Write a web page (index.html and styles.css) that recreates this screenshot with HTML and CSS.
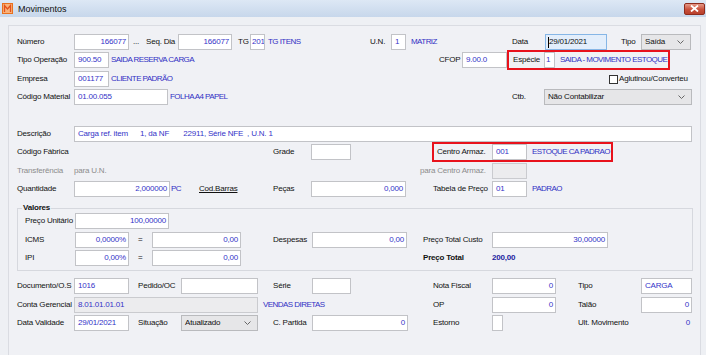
FILE: index.html
```html
<!DOCTYPE html>
<html lang="pt">
<head>
<meta charset="utf-8">
<title>Movimentos</title>
<link rel="stylesheet" href="styles.css">
</head>
<body>
<div class="titlebar">
  <div class="title">
    <svg class="appicon" width="11" height="11" viewBox="0 0 11 11"><rect x="0" y="0" width="11" height="11" fill="#f9b27a"/><rect x="0.5" y="0.5" width="10" height="10" fill="none" stroke="#e8701e"/><path d="M2.5 9V2.5L5.5 6 8.5 2.5V9" fill="none" stroke="#e4501a" stroke-width="1.3"/></svg>
    <span>Movimentos</span>
  </div>
  <div class="close"><svg width="9" height="7" viewBox="0 0 9 7"><path d="M1 0.5L8 6.5M8 0.5L1 6.5" stroke="#fff" stroke-width="1.8"/></svg></div>
</div>

<div class="panel">
  <div class="row r1">
    <span class="lbl w57">Número</span>
    <div class="fld w55 num">166077</div>
    <span class="dots w17">...</span>
    <span class="lbl w32">Seq. Dia</span>
    <div class="fld w54 num">166077</div>
    <span class="lbl w18 p6">TG</span>
    <div class="fld w15 tight">201</div>
    <span class="d w105 p3">TG ITENS</span>
    <span class="lbl w21">U.N.</span>
    <div class="fld w15">1</div>
    <span class="d w106 p5">MATRIZ</span>
    <span class="lbl w33">Data</span>
    <div class="fld w62 date"><span class="caret"></span>29/01/2021</div>
    <span class="lbl w34 p14">Tipo</span>
    <div class="sel w50">Saída<svg class="chev" width="7" height="4" viewBox="0 0 7 4"><path d="M0.5 0.5L3.5 3.5 6.5 0.5" fill="none" stroke="#666"/></svg></div>
  </div>

  <div class="row r2">
    <span class="lbl w57">Tipo Operação</span>
    <div class="fld w35">900.50</div>
    <span class="d w330 p2">SAIDA RESERVA CARGA</span>
    <span class="lbl w23">CFOP</span>
    <div class="fld w45">9.00.0</div>
    <div class="redbox w163">
      <span class="lbl w35 p4">Espécie</span>
      <div class="fld w11 tight">1</div>
      <span class="d p5">SAIDA - MOVIMENTO ESTOQUE</span>
    </div>
  </div>

  <div class="row r3">
    <span class="lbl w57">Empresa</span>
    <div class="fld w35">001177</div>
    <span class="d w500 p2">CLIENTE PADRÃO</span>
    <span class="check"></span>
    <span class="lbl p1">Aglutinou/Converteu</span>
  </div>

  <div class="row r4">
    <span class="lbl w57">Código Material</span>
    <div class="fld w94">01.00.055</div>
    <span class="d w344 p2">FOLHA A4 PAPEL</span>
    <span class="lbl w32">Ctb.</span>
    <div class="sel w148">Não Contabilizar<svg class="chev" width="7" height="4" viewBox="0 0 7 4"><path d="M0.5 0.5L3.5 3.5 6.5 0.5" fill="none" stroke="#666"/></svg></div>
  </div>

  <div class="row r5">
    <span class="lbl w57">Descrição</span>
    <div class="fld w618 pre">Carga ref. item      1, da NF       22911, Série NFE  , U.N. 1</div>
  </div>

  <div class="row r6">
    <span class="lbl w256">Código Fábrica</span>
    <span class="lbl w38">Grade</span>
    <div class="fld w40"></div>
    <span class="w81"></span>
    <div class="redbox w181">
      <span class="lbl w58 p3">Centro Armaz.</span>
      <div class="fld w35">001</div>
      <span class="d p5">ESTOQUE CA PADRAO</span>
    </div>
  </div>

  <div class="row r7">
    <span class="lbl gray w57">Transferência</span>
    <span class="lbl gray w346">para U.N.</span>
    <span class="lbl gray w72">para Centro Armaz.</span>
    <div class="fld w35 dis"></div>
  </div>

  <div class="row r8">
    <span class="lbl w57">Quantidade</span>
    <div class="fld w96 num">2,000000</div>
    <span class="d w29 p1">PC</span>
    <span class="lbl w74 link">Cod.Barras</span>
    <span class="lbl w38">Peças</span>
    <div class="fld w95 num">0,000</div>
    <span class="w27"></span>
    <span class="lbl w59">Tabela de Preço</span>
    <div class="fld w35">01</div>
    <span class="d p5">PADRAO</span>
  </div>

  <fieldset class="group">
    <legend>Valores</legend>
    <div class="row ga">
      <span class="lbl w50">Preço Unitário</span>
      <div class="fld w94 num">100,00000</div>
    </div>
    <div class="row gb">
      <span class="lbl w50">ICMS</span>
      <div class="fld w54 num">0,0000%</div>
      <span class="lbl w23 p9">=</span>
      <div class="fld w89 num">0,00</div>
      <span class="w32"></span>
      <span class="lbl w39">Despesas</span>
      <div class="fld w95 num">0,00</div>
      <span class="w16"></span>
      <span class="lbl w69">Preço Total Custo</span>
      <div class="fld w116 num">30,00000</div>
    </div>
    <div class="row gc">
      <span class="lbl w50">IPI</span>
      <div class="fld w54 num">0,00%</div>
      <span class="lbl w23 p9">=</span>
      <div class="fld w89 num">0,00</div>
      <span class="w182"></span>
      <span class="lbl bold w69">Preço Total</span>
      <span class="total">200,00</span>
    </div>
  </fieldset>

  <div class="row rd">
    <span class="lbl w57">Documento/O.S</span>
    <div class="fld w55">1016</div>
    <span class="lbl w52 p9">Pedido/OC</span>
    <div class="fld w77"></div>
    <span class="lbl w54 p15">Série</span>
    <div class="fld w39"></div>
    <span class="w82"></span>
    <span class="lbl w59">Nota Fiscal</span>
    <div class="fld w64 num">0</div>
    <span class="lbl w85 p22">Tipo</span>
    <div class="fld w51">CARGA</div>
  </div>

  <div class="row re">
    <span class="lbl w57">Conta Gerencial</span>
    <div class="fld w184 dis">8.01.01.01.01</div>
    <span class="d w175 p5">VENDAS DIRETAS</span>
    <span class="lbl w59">OP</span>
    <div class="fld w64 num">0</div>
    <span class="lbl w85 p22">Talão</span>
    <div class="fld w51 num">0</div>
  </div>

  <div class="row rf">
    <span class="lbl w57">Data Validade</span>
    <div class="fld w55">29/01/2021</div>
    <span class="lbl w52 p9">Situação</span>
    <div class="sel w77">Atualizado<svg class="chev" width="7" height="4" viewBox="0 0 7 4"><path d="M0.5 0.5L3.5 3.5 6.5 0.5" fill="none" stroke="#666"/></svg></div>
    <span class="lbl w54 p15">C. Partida</span>
    <div class="fld w96 num">0</div>
    <span class="w25"></span>
    <span class="lbl w59">Estorno</span>
    <div class="fld w11"></div>
    <span class="w75"></span>
    <div class="ult"><span class="lbl">Ult. Movimento</span><span class="val">0</span></div>
  </div>
</div>
</body>
</html>
```

FILE: styles.css
```css
* { box-sizing: border-box; }
html, body { margin: 0; padding: 0; }
body {
  width: 706px;
  height: 355px;
  overflow: hidden;
  background: #eef0f4;
  font-family: "Liberation Sans", Arial, sans-serif;
  font-size: 8px;
  letter-spacing: -0.2px;
  color: #111;
}

.titlebar {
  height: 17px;
  background: linear-gradient(#dde8f5, #c7d7eb);
  display: flex;
  align-items: center;
  justify-content: space-between;
  padding: 0 1px 0 2px;
}
.title { display: flex; align-items: center; gap: 5px; font-size: 9px; letter-spacing: 0; color: #111; }
.appicon { display: block; }
.close {
  width: 21px;
  height: 12px;
  border: 1px solid #8e2c1d;
  border-radius: 2px;
  background: linear-gradient(#e69a88, #c9503b 55%, #b8402c);
  display: flex;
  align-items: center;
  justify-content: center;
}
.close svg { display: block; }

.panel {
  margin: 8px 0 0 8px;
  width: 693px;
  height: 340px;
  border: 1px solid #dadce2;
  border-bottom: none;
  background: #f0f1f5;
  padding: 8px 0 0 8px;
}

.row {
  display: flex;
  align-items: center;
  height: 16px;
  white-space: nowrap;
}
.r2 { margin-top: 2px; }
.r3 { margin-top: 3px; }
.r4 { margin-top: 2px; }
.r5 { margin-top: 21px; }
.r6 { margin-top: 2px; }
.r7 { margin-top: 3px; }
.r8 { margin-top: 2px; }
.gb { margin-top: 3px; }
.gc { margin-top: 2px; }
.rd { margin-top: 7px; }
.re { margin-top: 3px; }
.rf { margin-top: 2px; }

.lbl, .d, .dots { display: block; flex: none; line-height: 16px; }
.d { color: #3030c4; letter-spacing: -0.55px; }
.gray { color: #8c8c8c; }
.bold { font-weight: bold; color: #111; }
.link { text-decoration: underline; }
.dots { line-height: 20px; padding-left: 4px; font-size: 8px; }

.fld {
  flex: none;
  height: 16px;
  background: #fff;
  border: 1px solid #c2c3c7;
  color: #3434c8;
  line-height: 14px;
  padding: 0 2px 0 3px;
  overflow: hidden;
}
.fld.num { text-align: right; }
.fld.tight { padding: 0 1px; }
.fld.pre { white-space: pre; }
.fld.dis { background: #ececee; border-color: #cacbcf; }
.fld.date {
  background: #e3eefb;
  border-color: #86b6e6;
  color: #111;
  padding-left: 2px;
  display: flex;
  align-items: center;
}
.caret { display: block; width: 1px; height: 11px; background: #000; }

.sel {
  flex: none;
  height: 16px;
  background: #e6e6e8;
  border: 1px solid #b9babd;
  color: #111;
  line-height: 14px;
  padding: 0 3px;
  display: flex;
  align-items: center;
  justify-content: space-between;
}
.chev { display: block; margin-right: 3px; }

.redbox {
  flex: none;
  height: 20px;
  border: 2px solid #e8121c;
  display: flex;
  align-items: center;
}

.check {
  display: block;
  flex: none;
  width: 9px;
  height: 9px;
  background: #fff;
  border: 1px solid #333;
}

.group {
  margin: 6px 0 0 0;
  width: 676px;
  border: 1px solid #d6d8de;
  padding: 0 0 4px 7px;
  min-width: 0;
}
.group legend {
  font-weight: bold;
  color: #111;
  line-height: 10px;
  padding: 0 1px;
  margin-left: -3px;
  font-size: 8px;
}
.total { font-weight: bold; color: #22229e; line-height: 16px; }

.ult { display: flex; justify-content: space-between; width: 114px; padding-right: 2px; flex: none; }
.ult .val { color: #3434c8; line-height: 16px; }

.p1 { padding-left: 1px; }
.p2 { padding-left: 2px; }
.p3 { padding-left: 3px; }
.p4 { padding-left: 4px; }
.p5 { padding-left: 5px; }
.p6 { padding-left: 6px; }
.p9 { padding-left: 9px; }
.p14 { padding-left: 14px; }
.p15 { padding-left: 15px; }
.p22 { padding-left: 22px; }

.w11 { width: 11px; flex: none; }
.w15 { width: 15px; flex: none; }
.w16 { width: 16px; flex: none; }
.w17 { width: 17px; flex: none; }
.w18 { width: 18px; flex: none; }
.w21 { width: 21px; flex: none; }
.w23 { width: 23px; flex: none; }
.w25 { width: 25px; flex: none; }
.w27 { width: 27px; flex: none; }
.w29 { width: 29px; flex: none; }
.w32 { width: 32px; flex: none; }
.w33 { width: 33px; flex: none; }
.w34 { width: 34px; flex: none; }
.w35 { width: 35px; flex: none; }
.w38 { width: 38px; flex: none; }
.w39 { width: 39px; flex: none; }
.w40 { width: 40px; flex: none; }
.w45 { width: 45px; flex: none; }
.w50 { width: 50px; flex: none; }
.w51 { width: 51px; flex: none; }
.w52 { width: 52px; flex: none; }
.w54 { width: 54px; flex: none; }
.w55 { width: 55px; flex: none; }
.w57 { width: 57px; flex: none; }
.w58 { width: 58px; flex: none; }
.w59 { width: 59px; flex: none; }
.w62 { width: 62px; flex: none; }
.w64 { width: 64px; flex: none; }
.w69 { width: 69px; flex: none; }
.w72 { width: 72px; flex: none; }
.w74 { width: 74px; flex: none; }
.w75 { width: 75px; flex: none; }
.w77 { width: 77px; flex: none; }
.w81 { width: 81px; flex: none; }
.w82 { width: 82px; flex: none; }
.w85 { width: 85px; flex: none; }
.w89 { width: 89px; flex: none; }
.w94 { width: 94px; flex: none; }
.w95 { width: 95px; flex: none; }
.w96 { width: 96px; flex: none; }
.w105 { width: 105px; flex: none; }
.w106 { width: 106px; flex: none; }
.w116 { width: 116px; flex: none; }
.w148 { width: 148px; flex: none; }
.w163 { width: 163px; flex: none; }
.w175 { width: 175px; flex: none; }
.w181 { width: 181px; flex: none; }
.w182 { width: 182px; flex: none; }
.w184 { width: 184px; flex: none; }
.w256 { width: 256px; flex: none; }
.w330 { width: 330px; flex: none; }
.w344 { width: 344px; flex: none; }
.w346 { width: 346px; flex: none; }
.w500 { width: 500px; flex: none; }
.w618 { width: 618px; flex: none; }
```
